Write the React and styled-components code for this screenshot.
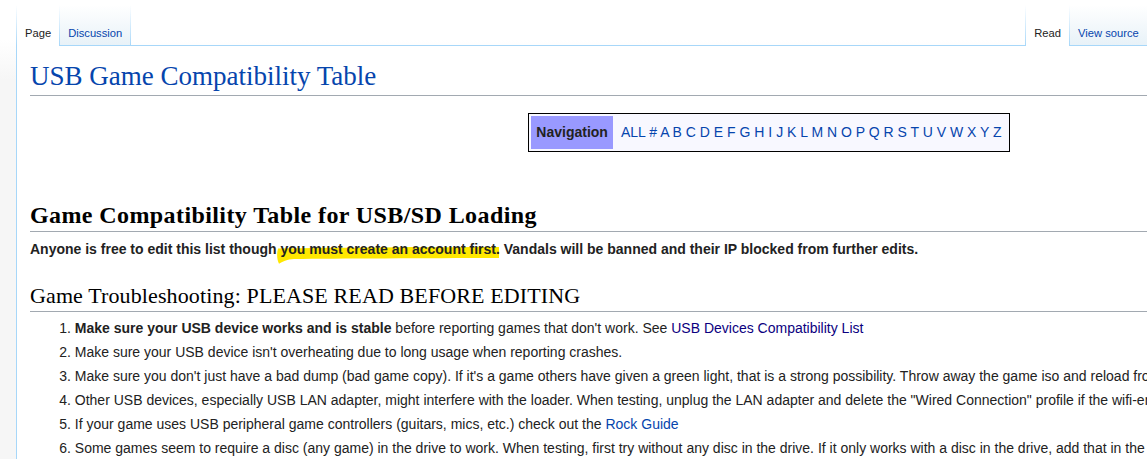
import React from 'react';
import styled, { createGlobalStyle } from 'styled-components';

const Global = createGlobalStyle`
  html, body { margin: 0; padding: 0; overflow: hidden; }
  html {
    background: linear-gradient(#fff 50%, #f6f6f6 100%) 0 0 / 100% 80px no-repeat, #f6f6f6;
  }
  body {
    font-family: "Liberation Sans", Arial, sans-serif;
    color: #222;
  }
`;

const Page = styled.div`
  width: 1524px;
`;

const Header = styled.header`
  display: flex;
  align-items: flex-end;
  height: 45px;
  padding-left: 16px;
`;

const TabGroup = styled.nav`
  display: flex;
  align-items: flex-end;
  margin-left: ${(p) => p.$offset || 0}px;
`;

const Separator = styled.span`
  display: block;
  width: 1px;
  height: 41px;
  margin-bottom: -1px;
  background: linear-gradient(to bottom, rgba(167, 215, 249, 0) 0, #a7d7f9 100%);
  position: relative;
`;

const Tab = styled.a`
  position: relative;
  display: flex;
  align-items: flex-end;
  box-sizing: border-box;
  height: 41px;
  margin-bottom: -1px;
  padding: 0 8px 6px;
  font-size: 11.2px;
  line-height: 14px;
  text-decoration: none;
  cursor: pointer;
  color: ${(p) => (p.$selected ? '#222' : '#0645ad')};
  background: ${(p) =>
    p.$selected
      ? '#fff'
      : 'linear-gradient(to top, #a7d7f9 0, #a7d7f9 1px, #e8f2f8 1px, #fff 100%)'};
`;

const Content = styled.main`
  margin-left: 16px;
  border-top: 1px solid #a7d7f9;
  border-left: 1px solid #a7d7f9;
  background: #fff;
  padding: 13px 16px 40px 13px;
`;

const Title = styled.h1`
  margin: 0;
  padding: 0 0 1px;
  font-family: "Liberation Serif", "Times New Roman", serif;
  font-size: 27px;
  font-weight: normal;
  line-height: 35px;
  color: #0645ad;
  border-bottom: 1px solid #a2a9b1;
`;

const NavBox = styled.div`
  display: flex;
  gap: 2px;
  width: fit-content;
  margin: 17px auto 0;
  padding: 2px;
  border: 1px solid #000;
  background: #f8f8ff;
  font-size: 14px;
  line-height: 23px;
`;

const NavLabel = styled.div`
  padding: 5px;
  background: #9999ff;
  font-weight: bold;
  color: #222;
`;

const NavLinks = styled.div`
  padding: 5px 5px 5px 6px;
`;

const Link = styled.a`
  color: ${(p) => (p.$visited ? '#0b0080' : '#0645ad')};
  text-decoration: none;
  cursor: pointer;
`;

const SectionHeading = styled.h2`
  margin: ${(p) => p.$top}px 0 0;
  padding: 0;
  font-family: "Liberation Serif", "Times New Roman", serif;
  font-size: ${(p) => (p.$bold ? 24 : 22)}px;
  font-weight: ${(p) => (p.$bold ? 'bold' : 'normal')};
  letter-spacing: ${(p) => (p.$bold ? '0.4px' : '0.12px')};
  line-height: ${(p) => (p.$bold ? 32 : 30)}px;
  color: #000;
  border-bottom: 1px solid #a2a9b1;
`;

const Notice = styled.p`
  margin: 6px 0 0;
  font-size: 14px;
  font-weight: bold;
  line-height: 22.4px;
`;

const Marked = styled.span`
  position: relative;
  z-index: 0;
`;

const Stroke = styled.svg`
  position: absolute;
  left: -4px;
  top: 5px;
  width: 224px;
  height: 18px;
  z-index: -1;
`;

const Steps = styled.ol`
  margin: 5px 0 0 44.8px;
  padding: 0;
  font-size: 14px;
  line-height: 22.4px;
`;

const Step = styled.li`
  margin-bottom: 1.6px;
`;

const letters = ['ALL', '#', ...'ABCDEFGHIJKLMNOPQRSTUVWXYZ'.split('')];

export default function App() {
  return (
    <>
      <Global />
      <Page>
        <Header>
          <TabGroup>
            <Separator />
            <Tab $selected>Page</Tab>
            <Separator />
            <Tab>Discussion</Tab>
            <Separator />
          </TabGroup>
          <TabGroup $offset={894}>
            <Separator />
            <Tab $selected>Read</Tab>
            <Separator />
            <Tab>View source</Tab>
            <Separator />
            <Tab>View history</Tab>
            <Separator />
          </TabGroup>
        </Header>

        <Content>
          <Title>USB Game Compatibility Table</Title>

          <NavBox>
            <NavLabel>Navigation</NavLabel>
            <NavLinks>
              {letters.map((l, i) => (
                <React.Fragment key={l}>
                  {i > 0 && ' '}
                  <Link>{l}</Link>
                </React.Fragment>
              ))}
            </NavLinks>
          </NavBox>

          <SectionHeading $bold $top={47}>
            Game Compatibility Table for USB/SD Loading
          </SectionHeading>
          <Notice>
            Anyone is free to edit this list though{' '}
            <Marked>
              <Stroke viewBox="0 0 224 18" preserveAspectRatio="none" aria-hidden="true">
                <path
                  d="M2 2.5 C 60 1.5, 150 1.2, 223 1 L 223 12 C 150 12.2, 60 12.5, 18 13 C 11 13.4, 6 15.5, 3 17.8 C 1 14, 0.5 8, 2 2.5 Z"
                  fill="#ffe800"
                />
              </Stroke>
              you must create an account first.
            </Marked>{' '}
            Vandals will be banned and their IP blocked from further edits.
          </Notice>

          <SectionHeading $top={21}>Game Troubleshooting: PLEASE READ BEFORE EDITING</SectionHeading>
          <Steps>
            <Step>
              <b>Make sure your USB device works and is stable</b> before reporting games that don't
              work. See <Link $visited>USB Devices Compatibility List</Link>
            </Step>
            <Step>Make sure your USB device isn't overheating due to long usage when reporting crashes.</Step>
            <Step>
              Make sure you don't just have a bad dump (bad game copy). If it's a game others have
              given a green light, that is a strong possibility. Throw away the game iso and reload from disc.
            </Step>
            <Step>
              Other USB devices, especially USB LAN adapter, might interfere with the loader. When
              testing, unplug the LAN adapter and delete the "Wired Connection" profile if the wifi-enabled one works.
            </Step>
            <Step>
              If your game uses USB peripheral game controllers (guitars, mics, etc.) check out the{' '}
              <Link>Rock Guide</Link>
            </Step>
            <Step>
              Some games seem to require a disc (any game) in the drive to work. When testing, first
              try without any disc in the drive. If it only works with a disc in the drive, add that in the notes.
            </Step>
          </Steps>
        </Content>
      </Page>
    </>
  );
}
